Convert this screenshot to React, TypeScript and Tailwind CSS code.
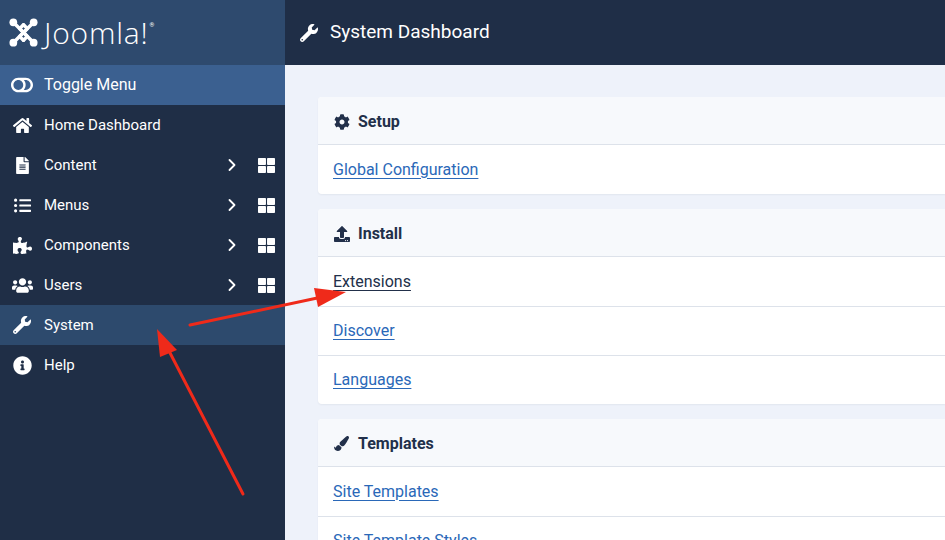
import { FaToggleOff, FaHome, FaFileAlt, FaListUl, FaPuzzlePiece, FaUsers, FaWrench, FaInfoCircle, FaCog, FaUpload, FaPaintBrush, FaThLarge } from "react-icons/fa";
import { ChevronRight } from "lucide-react";
import type { ReactNode } from "react";

const MENU = [
  { label: "Home Dashboard", icon: <FaHome className="h-[19px] w-[19px]" /> },
  { label: "Content", icon: <FaFileAlt className="h-[17px] w-[17px]" />, sub: true },
  { label: "Menus", icon: <FaListUl className="h-[17px] w-[17px]" />, sub: true },
  { label: "Components", icon: <FaPuzzlePiece className="h-[19px] w-[19px]" />, sub: true },
  { label: "Users", icon: <FaUsers className="h-[21px] w-[21px]" />, sub: true },
  { label: "System", icon: <FaWrench className="h-[18px] w-[18px]" />, active: true },
  { label: "Help", icon: <FaInfoCircle className="h-[19px] w-[19px]" /> },
];

function JoomlaLogo() {
  return (
    <svg viewBox="0 0 32 32" className="h-[31px] w-[31px]" fill="none" stroke="white" strokeLinecap="round" strokeLinejoin="round">
      {/* four knobs */}
      <circle cx="5.5" cy="5.5" r="4" fill="white" stroke="none" />
      <circle cx="26.5" cy="5.5" r="4" fill="white" stroke="none" />
      <circle cx="5.5" cy="26.5" r="4" fill="white" stroke="none" />
      <circle cx="26.5" cy="26.5" r="4" fill="white" stroke="none" />
      {/* interlocking arms */}
      <path d="M7 7 L20 20 L16 24" strokeWidth="3.6" />
      <path d="M25 7 L12 20 L16 24" strokeWidth="3.6" />
      <path d="M7 25 L20 12 L16 8" strokeWidth="3.6" />
      <path d="M25 25 L12 12 L16 8" strokeWidth="3.6" />
    </svg>
  );
}

function Card({ icon, title, links }: { icon: ReactNode; title: string; links: { label: string; hover?: boolean }[] }) {
  return (
    <div className="overflow-hidden rounded-[4px] bg-white shadow-[0_1px_2px_rgba(30,45,70,0.06)]">
      <div className="flex h-[48px] items-center gap-[8px] border-b border-[#dde2ea] bg-[#f7f9fc] bg-[radial-gradient(#e8ecf3_0.6px,transparent_0.6px)] bg-[length:6px_6px] px-[15px] pt-[2px] text-[16px] font-bold text-[#22304a]">
        <span className="flex w-[17px] justify-center">{icon}</span>
        <span>{title}</span>
      </div>
      {links.map((l, i) => (
        <div
          key={l.label}
          className={`flex h-[49px] items-center px-[15px] text-[16px] ${i > 0 ? "border-t border-[#dde2ea]" : ""}`}
        >
          <a className={`underline underline-offset-[3px] ${l.hover ? "text-[#22304a]" : "text-[#2a68b8]"}`}>{l.label}</a>
        </div>
      ))}
    </div>
  );
}

export default function App() {
  return (
    <div className="relative flex h-[540px] w-[945px] overflow-hidden font-['Roboto',sans-serif]">
      {/* Sidebar */}
      <aside className="flex w-[285px] shrink-0 flex-col bg-[#1f2e46] text-white">
        <div className="flex h-[65px] items-center gap-[5px] bg-[#2e4a6e] pl-[8px]">
          <JoomlaLogo />
          <span className="font-['Open_Sans',sans-serif] text-[30px] font-light leading-none tracking-[0.8px]">Joomla!</span>
          <span className="-ml-[4px] -mt-[16px] text-[6px]">®</span>
        </div>
        <div className="flex h-[40px] items-center bg-[#3b6090] text-[16px]">
          <span className="flex w-[44px] justify-center"><FaToggleOff className="h-[22px] w-[22px]" /></span>
          <span>Toggle Menu</span>
        </div>
        {MENU.map((m) => (
          <div key={m.label} className={`flex h-[40px] items-center text-[15px] ${m.active ? "bg-[#2d4a6d]" : ""}`}>
            <span className="flex w-[44px] justify-center">{m.icon}</span>
            <span className="flex-1">{m.label}</span>
            {m.sub && (
              <>
                <ChevronRight className="mr-[16px] h-[20px] w-[20px]" strokeWidth={2.2} />
                <FaThLarge className="mr-[10px] h-[17px] w-[17px]" />
              </>
            )}
          </div>
        ))}
      </aside>

      {/* Main */}
      <div className="flex flex-1 flex-col">
        <header className="flex h-[65px] shrink-0 items-center gap-[12px] bg-[#1f2e47] pl-[15px] text-white">
          <FaWrench className="h-[18px] w-[18px]" />
          <h1 className="text-[19px] font-normal">System Dashboard</h1>
        </header>
        <main className="flex flex-1 flex-col gap-[15px] bg-[#eef2fa] pl-[33px] pt-[32px]">
          <div className="-mr-[4px]">
            <Card icon={<FaCog className="h-[16px] w-[16px]" />} title="Setup" links={[{ label: "Global Configuration" }]} />
          </div>
          <div className="-mr-[4px]">
            <Card
              icon={<FaUpload className="h-[16px] w-[16px]" />}
              title="Install"
              links={[{ label: "Extensions", hover: true }, { label: "Discover" }, { label: "Languages" }]}
            />
          </div>
          <div className="-mr-[4px]">
            <Card
              icon={<FaPaintBrush className="h-[15px] w-[15px]" />}
              title="Templates"
              links={[{ label: "Site Templates" }, { label: "Site Template Styles" }]}
            />
          </div>
        </main>
      </div>

      {/* Annotation arrows */}
      <svg className="pointer-events-none absolute inset-0 h-full w-full" viewBox="0 0 945 540">
        <g stroke="#ef2a1a" strokeWidth="3" fill="#ef2a1a" strokeLinecap="round">
          <line x1="190" y1="325" x2="322" y2="297" />
          <polygon points="346,292 318,307 314,288" stroke="none" />
          <line x1="243" y1="494" x2="168" y2="349" />
          <polygon points="157,329 177,350 160,357" stroke="none" />
        </g>
      </svg>
    </div>
  );
}
